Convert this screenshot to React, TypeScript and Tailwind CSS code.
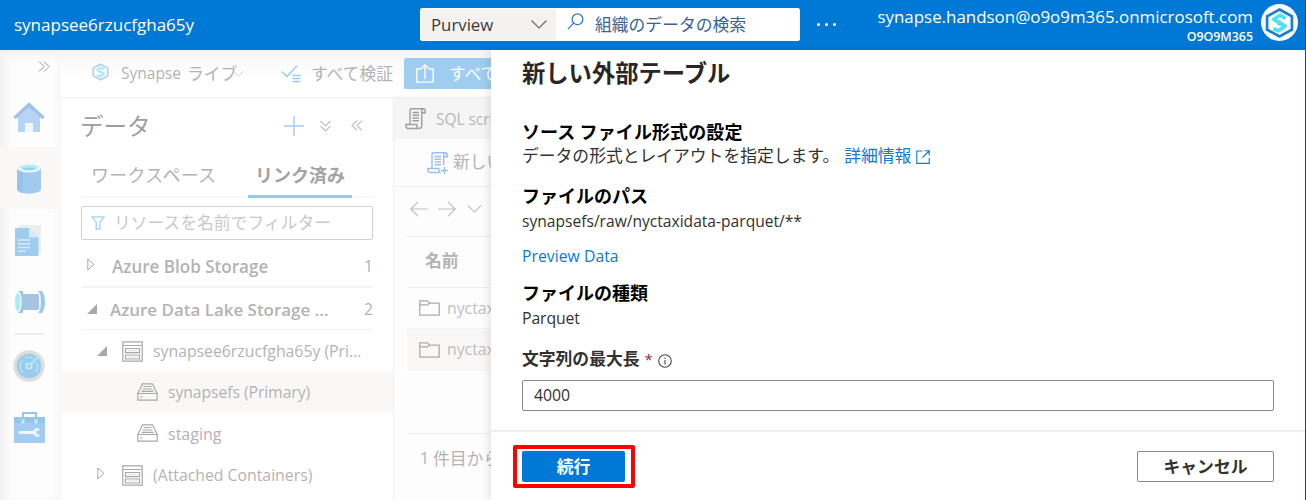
import type { ReactNode } from "react";

const Chevron = ({ className }: { className: string }) => (
  <svg viewBox="0 0 16 9" className={`shrink-0 ${className}`} fill="none" stroke="currentColor" strokeWidth="1.2">
    <path d="M.5.5 8 8 15.5.5" />
  </svg>
);

const SynapseMark = ({ className, outline, mark }: { className: string; outline: string; mark: string }) => (
  <svg viewBox="0 0 28 30" className={`shrink-0 ${className}`} fill="none">
    <path d="M14 2 26 8.5v13L14 28 2 21.5v-13Z" stroke={outline} strokeWidth="2.6" />
    <path d="M20 10.500 14.500 7.500 8.500 11.500 19.500 18 13 22.500 8 20.500" stroke={mark} strokeWidth="3.600" strokeLinejoin="round" />
    <circle cx="14" cy="15" r="2.500" fill={mark} />
  </svg>
);

const Database = ({ className }: { className: string }) => (
  <svg viewBox="0 0 21 21" className={`shrink-0 ${className}`} fill="none" stroke="#a8a8a8" strokeWidth="1.2">
    <path d="M.8.8h19.400v19.400H.8ZM.8 4.500h19.400M3.500 7.500h14v4.200h-14ZM3.500 14h14v4h-14Z" />
    <path d="M5.500 9.600h10M5.500 16h10" stroke="#e2e2e2" />
  </svg>
);

const Drive = () => (
  <svg viewBox="0 0 21 18" className="h-[18px] w-[21px] shrink-0" fill="none" stroke="#a8a8a8" strokeWidth="1.2">
    <path d="M.8 10.500h19.400v6.700H.8ZM.8 10.500 5.500.8h10l4.700 9.700M6.500 3.500h8M5.500 6h10M4.500 8.300h12M3 14h2.500" />
  </svg>
);

const Script = ({ color, plus }: { color: string; plus?: boolean }) => (
  <svg viewBox="0 0 21 22" className="h-[22px] w-[21px] shrink-0" fill="none" stroke={color} strokeWidth="1.4">
    <path d="M5 16V2.500C5 1.200 5.800.8 7 .8h11c1.500 0 2.300 1 2.300 2.600v1.400h-3.600" />
    <path d="M18 .8c-1 .6-1.300 1.500-1.300 3V13M5 16.500H.8c0 2.500.8 4 2.700 4h10" />
    <path d="M13.500 20.500c-1.500-.5-1.800-2-1.800-4H5M7.500 4.500h6.500M7.500 7.300h6.500M7.500 10h6.500M7.500 12.800h6.500" />
    {plus ? <path d="M17.500 15v7M14 18.500h7" /> : <path d="M16.700 12v6c0 1.500-1 2.500-3 2.500" />}
  </svg>
);

const Folder = () => (
  <svg viewBox="0 0 21 16" className="h-[16px] w-[21px] shrink-0" fill="none" stroke="#acacac" strokeWidth="1.3">
    <path d="M.8 15.200V.8h7.700l2 2.400h9.700v12ZM.8 4.800h7.500l2.200-1.600" />
  </svg>
);

const TriRight = ({ className }: { className: string }) => (
  <svg viewBox="0 0 8 13" className={`shrink-0 ${className}`} fill="none" stroke="#a8a8a8">
    <path d="M.8 1 7 6.500.8 12Z" />
  </svg>
);

const TriOpen = ({ className }: { className: string }) => (
  <svg viewBox="0 0 10 10" className={`shrink-0 ${className}`} fill="#a8a8a8">
    <path d="M10 0v10H0Z" />
  </svg>
);

const Latin = ({ children, size = "text-[15.800px]", className = "" }: { children: ReactNode; size?: string; className?: string }) => (
  <span className={`whitespace-nowrap font-['Open_Sans','Noto_Sans',sans-serif] ${size} ${className}`}>{children}</span>
);

function Header() {
  return (
    <header className="flex h-[50px] shrink-0 items-start bg-[#0078d6] text-white">
      <div className="w-[420px] pt-[13px] pl-[14px]">
        <Latin size="text-[17px]" className="block leading-[24px]">synapsee6rzucfgha65y</Latin>
      </div>
      <div className="mt-[8px] flex h-[33px] w-[380px] overflow-hidden rounded-[2px] border border-white bg-white">
        <div className="flex w-[135px] items-center justify-between bg-[#f3f2f1] pt-px pr-[9px] pl-[10px] text-[#3b3a39]">
          <Latin size="text-[16.800px]">Purview</Latin>
          <Chevron className="mb-px h-[9px] w-[16px] text-[#6b6a69]" />
        </div>
        <div className="flex items-center pl-[11px]">
          <svg viewBox="0 0 17 17" className="mb-[7px] h-[17px] w-[17px]" fill="none" stroke="#2f6fd0" strokeWidth="1.2">
            <circle cx="10.500" cy="6.300" r="5.400" />
            <path d="M6.700 10.200.8 16.200" />
          </svg>
          <span className="ml-[11px] whitespace-nowrap text-[16.800px] leading-none text-[#3a6394]">組織のデータの検索</span>
        </div>
      </div>
      <div className="mt-[23px] ml-[17px] flex gap-[5px]">
        <i className="size-[3px] rounded-full bg-white" />
        <i className="size-[3px] rounded-full bg-white" />
        <i className="size-[3px] rounded-full bg-white" />
      </div>
      <div className="ml-auto flex flex-col items-end pt-[5px]">
        <Latin size="text-[16.920px]" className="leading-[24px]">synapse.handson@o9o9m365.onmicrosoft.com</Latin>
        <Latin size="text-[12.400px]" className="leading-[15px] font-semibold">O9O9M365</Latin>
      </div>
      <div className="mt-[4px] mr-[7px] ml-[8px] flex size-[37px] items-center justify-center rounded-full bg-white">
        <SynapseMark className="h-[32px] w-[29px]" outline="#1b7fd2" mark="#4fe0f4" />
      </div>
    </header>
  );
}

function Sidebar() {
  return (
    <nav className="flex w-[60px] shrink-0 flex-col bg-[#fdfdfd] shadow-[inset_5px_5px_10px_#f1f1f1,inset_-3px_0_5px_#f8f8f8]">
      <div className="flex h-[35px] items-center pl-[38px]">
        <svg viewBox="0 0 12 11" className="mb-[2px] h-[11px] w-[12px]" fill="none" stroke="#999">
          <path d="m1 .5 5 5-5 5M6 .5l5 5-5 5" />
        </svg>
      </div>
      <div className="flex h-[62px] items-center pt-[3px] pl-[13px]">
        <svg viewBox="0 0 32 31" className="h-[31px] w-[32px]">
          <path d="M5 14 16 4l11 10v16H5Z" fill="#b5d4f6" />
          <path d="M1.500 16 16 2.500 30.500 16" fill="none" stroke="#9fc3e0" strokeWidth="3.200" />
          <path d="M12 21h8v9h-8Z" fill="#f5f5f5" />
        </svg>
      </div>
      <div className="flex h-[62px] w-[59px] items-center bg-[#f9f8f7] pl-[17px]">
        <svg viewBox="0 0 24 31" className="h-[31px] w-[24px]">
          <path d="M0 5v21c0 6 24 6 24 0V5Z" fill="#a0cbef" />
          <path d="M0 5v21c0 2 3 3.500 6 4V7Z" fill="#98c2e6" />
          <ellipse cx="12" cy="5" rx="12" ry="4.500" fill="#f1f5f8" />
          <ellipse cx="12" cy="4.500" rx="9" ry="2.800" fill="#aeeff6" />
          <path d="M5 6c4-2 10-2 14 0-4 1.800-10 1.800-14 0Z" fill="#93d5ed" />
        </svg>
      </div>
      <div className="flex h-[62px] items-center pl-[15px]">
        <svg viewBox="0 0 26 31" className="h-[31px] w-[26px]">
          <path d="M3 0h23v28H3Z" fill="#ededed" />
          <path d="M0 3h14l9.500 9.500V31H0Z" fill="#9fcdf0" />
          <path d="M14 3v9.500h9.500Z" fill="#d8e9fb" />
          <path d="M3 15h12M3 18.700h12M3 22.500h12M3 26.200h8" stroke="#d9ebf9" strokeWidth="1.500" />
        </svg>
      </div>
      <div className="flex h-[62px] items-center pl-[14px]">
        <svg viewBox="0 0 31 22" className="h-[22px] w-[31px]">
          <path d="M6 3h19v16H6Z" fill="#a5c4e1" />
          <path d="M4 0h5v3L7.500 11 9 19v3H4Z" fill="#9cc3e4" />
          <ellipse cx="4" cy="11" rx="3" ry="9.500" fill="#a9edf8" />
          <path d="M4 .8c4 3 4 17.400 0 20.400" fill="none" stroke="#eef7fb" strokeWidth="1.500" />
          <path d="M24 0h4c4 5 4 17 0 22h-4l2-5V5Z" fill="#9cc8ef" />
          <path d="M24 1c3 4 3 16 0 20" fill="none" stroke="#eef4fa" strokeWidth="1.500" />
        </svg>
      </div>
      <div className="ml-[14px] h-[2px] w-[31px] bg-[#ededed]" />
      <div className="flex h-[62px] items-center pl-[13px]">
        <svg viewBox="0 0 32 32" className="size-[32px]" fill="none">
          <circle cx="16" cy="16" r="14" fill="#9ecaed" stroke="#dedede" strokeWidth="3.500" />
          <path d="M10 9.500a9 9 0 0 0-.5 13M12.500 8.200a9 9 0 0 1 7.500 0M22.500 22a9 9 0 0 0 1-10" stroke="#a7eaf5" strokeWidth="1.500" />
          <circle cx="16" cy="16" r="2.700" stroke="#b9f1f8" strokeWidth="1.800" />
          <path d="m18 14 8-8" stroke="#a7eaf5" strokeWidth="2" />
        </svg>
      </div>
      <div className="flex h-[62px] items-center pb-[2px] pl-[14px]">
        <svg viewBox="0 0 31 32" className="h-[32px] w-[31px]" fill="none">
          <path d="M9 7V2h13v5" stroke="#98c4ea" strokeWidth="2" />
          <path d="M0 6h31v26H0Z" fill="#a2cdf0" />
          <path d="M0 6h31v6H0Z" fill="#98c4ea" />
          <path d="M7.500 8.500h3v4h-3ZM20.500 8.500h3v4h-3Z" fill="#b2f0fa" />
          <path d="M6 21.500h15" stroke="#f0f6fa" strokeWidth="3" strokeLinecap="round" />
          <path d="M25 19a3 3 0 1 0 0 5" stroke="#f0f6fa" strokeWidth="2.500" />
        </svg>
      </div>
    </nav>
  );
}

function CommandBar() {
  return (
    <div className="flex h-[48px] shrink-0 items-center border-b border-[#eee] bg-linear-to-b from-[#f3f3f3] via-[#fbfbfb] via-30% to-white to-60% pl-[32px] text-[#b3b3b3]">
      <SynapseMark className="mb-[3px] h-[18px] w-[17px]" outline="#a9d1f0" mark="#aee9f5" />
      <Latin size="text-[15.500px]" className="ml-[12px] pt-px">Synapse</Latin>
      <span className="ml-[6px] w-[46px] shrink-0 text-[16.800px] whitespace-nowrap">ライブ</span>
      <Chevron className="mt-px h-[6px] w-[11px] text-[#c4c4c4]" />
      <svg viewBox="0 0 20 18" className="mt-px ml-[37px] h-[18px] w-[20px] shrink-0" fill="none" stroke="#9fc8ee" strokeWidth="1.400">
        <path d="m.7 6.500 5.300 5L16 .8M11.500 10.500h8M11.500 13.500h8M11.500 16.500h8" />
      </svg>
      <span className="ml-[10px] w-[84px] shrink-0 text-[16.800px] whitespace-nowrap">すべて検証</span>
      <div className="ml-[9px] flex h-[31px] w-[120px] shrink-0 items-center rounded-[2px] bg-[#9fcdf0] pl-[12px] text-white">
        <svg viewBox="0 0 18 19" className="h-[19px] w-[18px] shrink-0" fill="none" stroke="currentColor" strokeWidth="1.300">
          <path d="M4.500 5H.8v13.200h16.400V5h-3.700M9 15V1M4.800 5 9 .8 13.200 5" />
        </svg>
        <span className="ml-[15px] text-[16.800px] whitespace-nowrap">すべて</span>
      </div>
    </div>
  );
}

function DataPane() {
  return (
    <section className="flex w-[333px] shrink-0 flex-col border-l border-[#f7f7f7] bg-white text-[#b3b3b3]">
      <div className="flex h-[54px] items-center pt-px pl-[19px]">
        <h2 className="w-[204px] text-[23.500px] leading-none font-normal text-[#9e9e9e]">データ</h2>
        <svg viewBox="0 0 20 20" className="h-[20px] w-[20px]" stroke="#a0cbf2" strokeWidth="1.400">
          <path d="M10 0v20M0 10h20" />
        </svg>
        <svg viewBox="0 0 11 12" className="ml-[16px] h-[12px] w-[11px]" fill="none" stroke="#969696">
          <path d="m.5 1 5 5 5-5m-10 5 5 5 5-5" />
        </svg>
        <svg viewBox="0 0 12 11" className="ml-[20px] h-[11px] w-[12px]" fill="none" stroke="#969696">
          <path d="m6 .5-5 5 5 5m5-10-5 5 5 5" />
        </svg>
      </div>
      <div className="mx-[20px] flex h-[46px] border-b-2 border-[#f7f7f7] text-[18px] leading-none">
        <div className="w-[167px] pt-[13px] pl-[10px] tracking-[0.300px]">ワークスペース</div>
        <div className="h-[46px] w-[104px] border-b-[3px] border-[#94c9f0] pt-[13px] text-center font-bold text-[#a3a3a3]">リンク済み</div>
      </div>
      <div className="mx-[20px] mt-[8px] flex h-[34px] w-[292px] shrink-0 items-center rounded-[2px] border border-[#d2d2d2] pl-[9px] text-[#c9c9c9]">
        <svg viewBox="0 0 14 14" className="h-[14px] w-[14px]" fill="none" stroke="#a5d2f3" strokeWidth="1.300">
          <path d="M.8.8h12.400L9 6v7H5.200V6Z" />
        </svg>
        <span className="ml-[9px] text-[16.800px] whitespace-nowrap">リソースを名前でフィルター</span>
      </div>
      <div className="mr-[20px] ml-[20px] flex h-[48px] items-center border-b-2 border-[#f4f4f4] pt-[8px] pl-[6px]">
        <TriRight className="mb-[6px] h-[13px] w-[8px]" />
        <Latin size="text-[17.050px]" className="ml-[17px] grow font-semibold">Azure Blob Storage</Latin>
        <Latin>1</Latin>
      </div>
      <div className="mr-[20px] ml-[20px] flex h-[42px] items-center border-b border-[#f2f2f2] pt-[3px] pl-[6px]">
        <TriOpen className="mb-[3px] h-[10px] w-[10px]" />
        <Latin size="text-[16.950px]" className="ml-[13px] grow font-semibold">Azure Data Lake Storage ...</Latin>
        <Latin>2</Latin>
      </div>
      <div className="flex h-[41px] items-center pt-[2px] pl-[36px]">
        <TriOpen className="mb-[2px] h-[10px] w-[10px]" />
        <Database className="ml-[15px] size-[21px]" />
        <Latin className="ml-[10px]">synapsee6rzucfgha65y (Pri...</Latin>
      </div>
      <div className="flex h-[42px] shrink-0 items-center bg-[#f9f8f7] pl-[76px]">
        <Drive />
        <Latin className="ml-[10px] pt-[2px] tracking-[-0.100px]">synapsefs (Primary)</Latin>
      </div>
      <div className="flex h-[41px] shrink-0 items-center pb-[2px] pl-[76px]">
        <Drive />
        <Latin size="text-[16px]" className="ml-[10px] pt-[2px]">staging</Latin>
      </div>
      <div className="flex h-[42px] shrink-0 items-center pl-[36px]">
        <TriRight className="mb-[3px] h-[13px] w-[8px]" />
        <Database className="ml-[17px] size-[21px]" />
        <Latin className="ml-[10px] pt-[2px]">(Attached Containers)</Latin>
      </div>
    </section>
  );
}

function FilesPane() {
  return (
    <section className="flex grow flex-col overflow-hidden border-l border-[#efefef] bg-[#fdfdfd] text-[#b3b3b3]">
      <div className="flex h-[41px] shrink-0 items-center bg-[#f5f5f5] pl-[11px] text-[#b8b8b8]">
        <Script color="#a0a0a0" />
        <Latin size="text-[15.400px]" className="ml-[10px] pt-[2px]">SQL script</Latin>
      </div>
      <div className="flex h-[48px] shrink-0 items-center border-b border-[#eee] pl-[33px]">
        <Script color="#9bc0ec" plus />
        <span className="ml-[5px] pb-[2px] text-[16.800px] whitespace-nowrap">新しい</span>
      </div>
      <div className="ml-[13px] flex h-[50px] shrink-0 items-center border-b border-[#eee] pb-[5px] pl-[3px] text-[#bdbdbd]">
        <svg viewBox="0 0 46 16" className="h-[16px] w-[46px] shrink-0" fill="none" stroke="currentColor" strokeWidth="1.200">
          <path d="M18 8H.8M8 .8.8 8 8 15.200M28 8h17.200M38 .8 45.200 8 38 15.200" />
        </svg>
        <Chevron className="ml-[11px] h-[8px] w-[15px]" />
      </div>
      <div className="ml-[13px] flex h-[51px] shrink-0 items-center border-b border-[#eee] pb-[2px] pl-[18px] text-[16.800px] font-bold">名前</div>
      <div className="ml-[13px] flex h-[41px] shrink-0 items-center border-b border-[#f3f3f3] pl-[12px]">
        <Folder />
        <Latin className="ml-[7px] pt-px text-[#bdbdbd]">nyctaxi</Latin>
      </div>
      <div className="ml-[13px] flex h-[42px] shrink-0 items-center bg-[#f9f8f7] pl-[12px]">
        <Folder />
        <Latin className="ml-[7px] text-[#bdbdbd]">nyctaxi</Latin>
      </div>
      <div className="mt-[62px] ml-[13px] flex h-[50px] shrink-0 items-center border-t border-[#eee] pl-[13px] whitespace-nowrap">
        <Latin>1</Latin>
        <span className="ml-[4px] text-[16.800px]">件目から</span>
      </div>
    </section>
  );
}

function TablePanel() {
  return (
    <aside className="z-10 flex w-[815px] shrink-0 flex-col bg-white text-[#323130] shadow-[-3px_0_8px_#00000018]">
      <div className="flex h-[380px] flex-col pl-[31px]">
        <h1 className="flex h-[44px] items-center text-[23.300px] font-bold text-[#282725]">新しい外部テーブル</h1>
        <h2 className="mt-[25px] flex h-[24px] items-center text-[18px] font-bold tracking-[0.100px] text-black">ソース ファイル形式の設定</h2>
        <div className="mt-px flex h-[24px] items-center text-[16.800px]">
          <span>データの形式とレイアウトを指定します。</span>
          <a className="ml-[5px] text-[#0f78d4]">詳細情報</a>
          <svg viewBox="0 0 14 14" className="mt-[2px] ml-[5px] size-[14px]" fill="none" stroke="#0f78d4" strokeWidth="1.100">
            <path d="M6.500 1H.8v12.400h12.400V8M8.500.8h4.700v4.700M13 1 6.500 7.500" />
          </svg>
        </div>
        <h3 className="mt-[15px] flex h-[24px] items-center text-[18px] font-bold text-black">ファイルのパス</h3>
        <Latin size="text-[15.600px]" className="mt-[2px] leading-[24px]">synapsefs/raw/nyctaxidata-parquet/**</Latin>
        <a className="mt-[10px] leading-[24px] text-[#0f78d4]"><Latin>Preview Data</Latin></a>
        <h3 className="mt-[12px] flex h-[24px] items-center text-[18px] font-bold text-black">ファイルの種類</h3>
        <Latin className="mt-[2px] leading-[24px] tracking-[-0.100px]">Parquet</Latin>
        <label className="mt-[17px] flex h-[24px] items-center text-[16.800px] font-bold">
          文字列の最大長
          <span className="ml-[5px] font-['Open_Sans',sans-serif] text-[15px] font-normal text-[#a4262c]">*</span>
          <svg viewBox="0 0 14 14" className="mt-[4px] ml-[5px] size-[14px]" fill="none" stroke="#484644" strokeWidth="1.100">
            <circle cx="7" cy="7" r="6.300" />
            <path d="M7 6v4.500M7 3.500v1.400" />
          </svg>
        </label>
        <div className="mt-[9px] flex h-[31px] w-[752px] shrink-0 items-center rounded-[2px] border border-[#8a8886] pl-[11px]">
          <Latin>4000</Latin>
        </div>
      </div>
      <footer className="flex h-[70px] items-start justify-between border-t-2 border-[#eee] pt-[13px] pr-[32px] pl-[22px]">
        <div className="flex h-[43px] w-[122px] items-center justify-center rounded-[2px] border-4 border-[#fd0000] pr-px">
          <button className="flex h-[31px] w-[103px] items-center justify-center rounded-[2px] bg-[#0078d6] text-[16.800px] font-bold text-white">続行</button>
        </div>
        <button className="mt-[6px] flex h-[31px] w-[137px] items-center justify-center rounded-[2px] border border-[#8a8886] text-[16.800px] font-bold">キャンセル</button>
      </footer>
    </aside>
  );
}

export default function App() {
  return (
    <div className="flex h-[500px] w-[1306px] flex-col overflow-hidden border-r border-[#2c4257] bg-white font-['Noto_Sans_CJK_JP',sans-serif]">
      <Header />
      <div className="flex h-[450px]">
        <Sidebar />
        <main className="flex w-[431px] shrink-0 flex-col overflow-hidden">
          <CommandBar />
          <div className="flex h-[402px]">
            <DataPane />
            <FilesPane />
          </div>
        </main>
        <TablePanel />
      </div>
    </div>
  );
}
